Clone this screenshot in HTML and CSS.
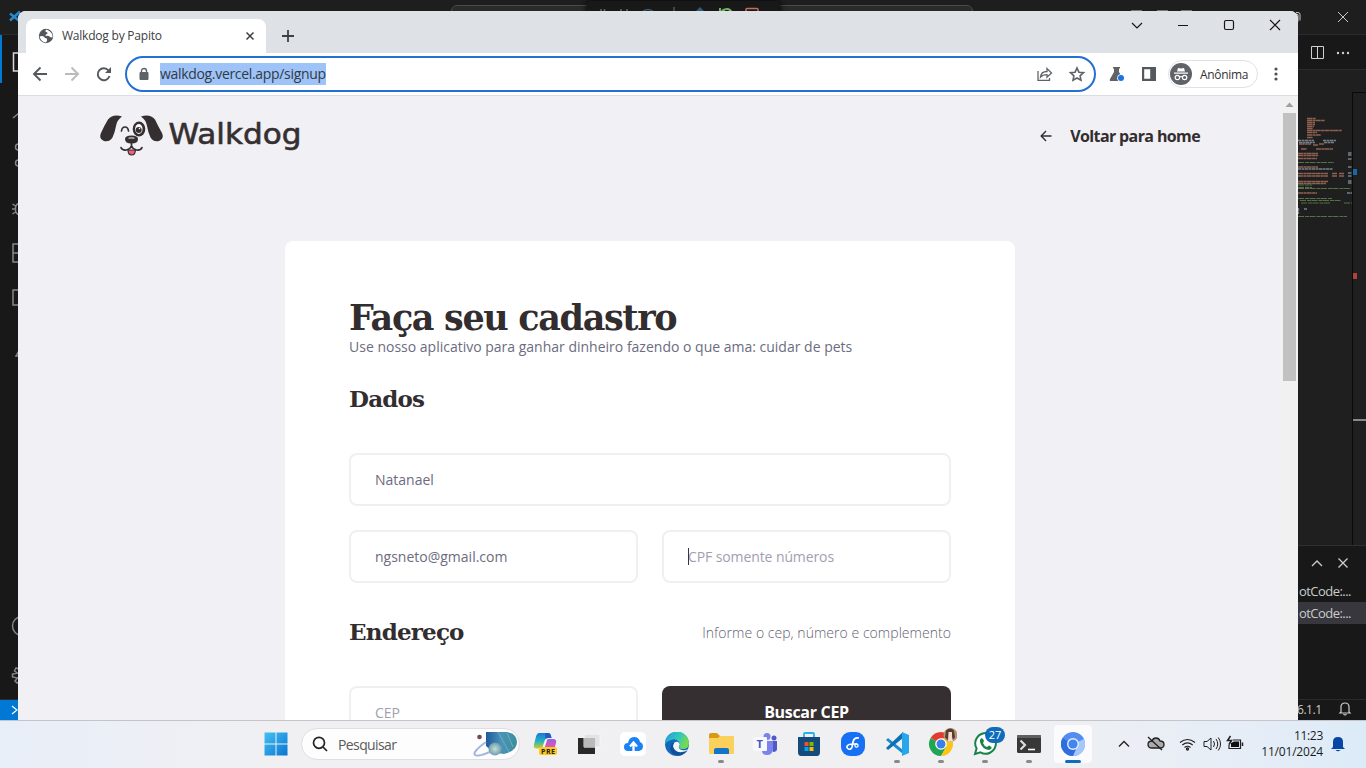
FILE: index.html
```
<!DOCTYPE html>
<html lang="pt-BR">
<head>
<meta charset="utf-8">
<title>Walkdog by Papito</title>
<link rel="stylesheet" href="styles.css">
</head>
<body>
<div class="desktop">
  <div class="editor">
    <div class="ed-title">
      <svg class="ed-logo" width="22" height="34" viewBox="0 0 22 34" fill="none" stroke="#2489ca" stroke-width="2.4"><path d="M10 13.500l10 8M10 20.500l10-9"/></svg>
      <div class="ed-search"></div>
      <svg class="ed-layout" width="70" height="12" viewBox="0 0 70 12" stroke="#777"><path d="M3 10.500h11M29 10.500h11M53 10.500h11"/></svg>
      <svg class="ed-winctl" width="70" height="34" viewBox="0 0 70 34" fill="none" stroke="#c8c8c8"><path d="M-4 14.500h6v7M-2 12.500h4q2 0 2 2v6" /><path d="M42 12l10 10M52 12l-10 10"/></svg>
    </div>
    <div class="debugbar">
      <svg width="193" height="12" viewBox="0 0 193 12" fill="none" stroke-width="1.500"><path d="M14 8v3M17.500 8v3M34 8v3M40 8v3" stroke="#666"/><path d="M55 11q6-5 12 0" stroke="#3c5870"/><path d="M87 6v5" stroke="#555"/><path d="M109 10l4-4 4 4z" fill="#36587a"/><path d="M133 7v3.500h5M135 9.500q7-4 10 2" stroke="#6fb35f" stroke-width="2"/><path d="M159 11V8.500q0-1 1-1h10q1 0 1 1V11" stroke="#c56e58"/></svg>
    </div>
    <div class="ed-main">
      <svg class="activity" width="48" height="664" viewBox="0 35 48 664" fill="none" stroke="#868686" stroke-width="1.500"><path d="M1 35v48" stroke="#0078d4" stroke-width="2"/><path d="M24 53H13.500v18H24" stroke="#d7d7d7"/><path d="M13 118l6-5"/><circle cx="18.500" cy="147" r="3"/><circle cx="18.500" cy="163" r="3"/><path d="M20 203q-4.500 1-4.500 5v2q0 4 4.500 5M15.500 206l-3-2M15.500 209H12M15.500 212l-3 2"/><path d="M22 244h-9v18h9M13 253h9"/><path d="M22 290h-9v15h9"/><path d="M20 349l-4 7h4"/><circle cx="22" cy="626" r="9.500"/><path d="M19 665v4l-3-1-1.500 3 3 2-5 1v3l5 1-2.500 3 2 2 3-2"/></svg>
      <div class="ed-side">
        <div class="ed-tabs"><svg width="68" height="34" viewBox="0 0 68 34" fill="none" stroke="#d0d0d0"><path d="M13.500 11.500h12v12h-12zM19.500 11.500v12"/><g fill="#d0d0d0" stroke="none"><circle cx="40" cy="18" r="1.200"/><circle cx="45" cy="18" r="1.200"/><circle cx="50" cy="18" r="1.200"/></g></svg></div>
        <svg class="minimap" width="68" height="475" viewBox="0 70 68 475" fill="none"><path d="M54.500 545V92.500H68" stroke="#090909"/>
          <g stroke-width="1.400" stroke-dasharray="5 .4 3 .3" stroke="#8f6150"><path d="M9 118.500h9M9 120.500h18M9 122.500h8M9 124.500h8M9 126.500h7M9 128.500h6M9 130.500h35M9 132.500h10M9 135h14M9 137.500h6M1 144h12M15 145h5M21 144h5M3 149h6M18 149h17M0 153.500h20M0 155.500h20M0 158.500h19M0 167h20M0 173.500h30M0 176h30M34 173.500h5M41 173.500h5M34 176h5M41 176h5M0 181.500h30M0 183.500h28M0 193h19"/></g>
          <g stroke-width="1.300" stroke="#77818a" stroke-dasharray="3 .5"><path d="M0 140.500h16M25 140.500h13M1 142.500h16M26 142.500h10M0 169h35M50 153h4M50 155h4M50 159h4M50 167h4M50 173h4M50 176h4M50 181h4M50 183h4M49 193h5M.5 208v6M6 209h3"/></g>
          <g stroke-width="1.200" stroke="#547044" stroke-dasharray="6 1 4 .5"><path d="M0 162.500h36M0 185h14M0 187.500h14M0 188.500h53M0 198.500h34M2 200.500h41M3 203h30M46 203h8M0 216.500h49"/></g>
          <path d="M55 172h4" stroke="#1769ab" stroke-width="6"/><path d="M55 276h4" stroke="#b0423b" stroke-width="6"/><path d="M55 420h13" stroke="#888" stroke-width="2"/></svg>
        <div class="ed-panel">
          <svg width="68" height="34" viewBox="0 0 68 34" fill="none" stroke="#ccc" stroke-width="1.300"><path d="M14 20l5-5 5 5M40.500 12.500l9 9M49.500 12.500l-9 9"/></svg>
          <div class="term">otCode:...</div>
          <div class="term term-on">otCode:...</div>
        </div>
      </div>
    </div>
    <div class="ed-status">
      <div class="remote"><svg width="34" height="21" viewBox="0 0 34 21" fill="none" stroke="#fff" stroke-width="1.200"><path d="M12 6l5 4-5 4"/></svg></div>
      <div class="ed-version"><span>6.1.1</span><svg width="14" height="16" viewBox="0 0 14 16" fill="none" stroke="#ccc" stroke-width="1.200"><path d="M3 11V6q0-4 4-4t4 4v5l1 1H2zM5.500 13q1.500 2 3 0"/></svg></div>
    </div>
  </div>

  <div class="chrome">
    <div class="tabstrip">
      <div class="tab">
        <svg width="16" height="16" viewBox="0 0 16 16"><circle cx="8" cy="8" r="7.200" fill="#53575b"/><path d="M1.500 8.500q3.500-1 4.700.5 1 1.500 2.800 1.500v2.500l-1 1.500Q3 14 1.500 8.500zM8.500 1.500q-2 1.500-.5 2.500 2 0 1.500 1.500-2.500 1-2 2.500 3-.7 4 .5t3 .8Q15 4 8.500 1.500z" fill="#fff"/></svg>
        <span class="tab-name">Walkdog by Papito</span>
        <svg width="10" height="10" viewBox="0 0 10 10" stroke="#3c4043" stroke-width="1.500"><path d="M1.500 1.500l7 7M8.500 1.500l-7 7"/></svg>
      </div>
      <svg class="newtab" width="14" height="14" viewBox="0 0 14 14" stroke="#3c4043" stroke-width="1.800"><path d="M7 1v12M1 7h12"/></svg>
      <svg class="winctl" width="156" height="28" viewBox="0 0 156 28" fill="none" stroke="#161616" stroke-width="1.200"><path d="M4 12l5 5 5-5M50 14.500h10"/><rect x="96.500" y="9.500" width="9" height="9" rx="1.500"/><path d="M142 9l10 10M152 9l-10 10"/></svg>
    </div>
    <div class="toolbar">
      <svg class="nav" width="88" height="20" viewBox="0 0 88 20" fill="none" stroke-width="1.900"><path d="M17 10H4M10.500 3.500L4 10l6.500 6.500" stroke="#55595d"/><path d="M35 10h13M41.500 3.500L48 10l-6.500 6.500" stroke="#b9bbbd"/><path d="M78.500 6.500A6 6 0 1 0 79.500 12" stroke="#55595d"/><path d="M81 3v6h-6z" fill="#55595d"/></svg>
      <div class="omnibox">
        <svg width="10" height="14" viewBox="0 0 10 14"><rect x=".5" y="5" width="9" height="8" rx="1" fill="#5f6368"/><path d="M2.500 5.500V4a2.500 2.500 0 0 1 5 0v1.500" fill="none" stroke="#5f6368" stroke-width="1.400"/></svg>
        <span class="url">walkdog.vercel.app/signup</span>
        <svg class="omni-act" width="50" height="18" viewBox="0 0 50 18" fill="none" stroke="#5f6368" stroke-width="1.300"><path d="M2 6v9.300h11.500V13M4.500 12q.5-5.500 6.500-5.500V3.500L15.500 8 11 12.300V9.600q-4.500 0-6.500 2.400z"/><path stroke-width="1.600" d="M41 3l1.900 4.200 4.600.5-3.400 3.100.9 4.500-4-2.300-4 2.300.9-4.500-3.400-3.100 4.600-.5z"/></svg>
      </div>
      <svg class="flask" width="16" height="16" viewBox="0 0 16 16"><path d="M4 1h7v1.500h-1V6l4 7q.5 2-1 2H2q-2 0-1-2l4-7V2.500H4z" fill="#5f6368"/><circle cx="12" cy="12" r="3.800" fill="#fff"/><circle cx="12" cy="12" r="3" fill="#1a73e8"/></svg>
      <svg class="panel-ico" width="14" height="14" viewBox="0 0 14 14"><path fill="#55595d" fill-rule="evenodd" d="M0 0h14v14H0zM2.200 2.200v9.600h6V2.200z"/></svg>
      <div class="profile">
        <svg width="22" height="22" viewBox="0 0 22 22"><circle cx="11" cy="11" r="11" fill="#5f6368"/><path d="M7 8.500L8 5q3 .8 6 0l1 3.500z" fill="#fff"/><g fill="none" stroke="#fff" stroke-width="1.200"><path d="M4 10.200h14M9.500 14q1.500-1 3 0"/><circle cx="7.400" cy="14.500" r="2.200"/><circle cx="14.600" cy="14.500" r="2.200"/></g></svg>
        <span>Anônima</span>
      </div>
      <svg class="kebab" width="4" height="14" viewBox="0 0 4 14" fill="#4d5155"><circle cx="2" cy="2" r="1.600"/><circle cx="2" cy="7" r="1.600"/><circle cx="2" cy="12" r="1.600"/></svg>
    </div>
    <div class="viewport">
      <div class="page">
        <header class="site-head">
          <svg class="logo" width="202" height="44" viewBox="0 0 202 44">
            <g fill="#352f31"><path d="M22 2.500Q13-.5 8 5.500 4 12 1 19q-2.500 6 3 8 5 1.500 8.500-3.500Q15 18 16 12q1-6 6-9.500zM41 2.500q9-3 14 3Q58 12 62 19q2.500 6-3 8-5 1.500-8.500-3.500Q48 18 47 12q-1-6-6-9.500z"/><ellipse cx="39" cy="15" rx="6.300" ry="7.500"/><path d="M25 25q0-3.500 6.500-3.500T38 25q0 4.500-6.500 4.500T25 25z"/></g>
            <ellipse cx="38.800" cy="15" rx="3.700" ry="5" fill="#fff"/><circle cx="38.700" cy="16" r="3" fill="#352f31"/><circle cx="39.500" cy="14.500" r=".8" fill="#fff"/><path d="M28.500 24.300q3-1 6 0" stroke="#ddd" stroke-width="1.200"/>
            <path d="M28 36q0 5 3.700 5t3.700-5z" fill="#f1617c" stroke="#352f31" stroke-width="1.200"/>
            <g fill="none" stroke="#352f31" stroke-width="1.700" stroke-linecap="round"><path d="M21.500 17q.5-4 3.500-4t3.500 4"/><path d="M31.500 29v4M21 33.500q1 3 5.500 2.500 4-1 5-4 1 3 5 4 4.500.5 5.500-2.500"/></g>
            <text class="logo-text" x="68.500" y="30" textLength="133" lengthAdjust="spacingAndGlyphs">Walkdog</text>
          </svg>
          <a class="back"><svg width="12" height="12" viewBox="0 0 12 12" fill="none" stroke="#352f31" stroke-width="1.400"><path d="M11.500 6H1.200M6 1L1.200 6 6 11"/></svg><span>Voltar para home</span></a>
        </header>
        <main class="card">
          <h1>Faça seu cadastro</h1>
          <p class="lead">Use nosso aplicativo para ganhar dinheiro fazendo o que ama: cuidar de pets</p>
          <div class="legend"><h2>Dados</h2></div>
          <div class="fields">
            <div class="field full"><span>Natanael</span></div>
            <div class="field"><span>ngsneto@gmail.com</span></div>
            <div class="field ph"><i class="caret"></i><span class="cpf">CPF somente números</span></div>
          </div>
          <div class="legend second"><h2>Endereço</h2><span class="hint">Informe o cep, número e complemento</span></div>
          <div class="fields">
            <div class="field ph"><span>CEP</span></div>
            <div class="btn">Buscar CEP</div>
          </div>
        </main>
      </div>
      <div class="scroll"><svg width="16" height="17" viewBox="0 0 16 17"><path d="M3.500 11L7.500 6.500 11.500 11z" fill="#a0a0a0"/></svg><div class="thumb"></div></div>
    </div>
  </div>

  <div class="taskbar">
    <div class="cell start"><svg width="24" height="24" viewBox="0 0 24 24"><defs><linearGradient id="w" x1="0" y1="0" x2="1" y2="1"><stop offset="0" stop-color="#44c2f5"/><stop offset="1" stop-color="#0a74d0"/></linearGradient></defs><path fill="url(#w)" d="M0.500 .5h11v11h-11zM12.500 .5h11v11h-11zM.5 12.500h11v11h-11zM12.500 12.500h11v11h-11z"/></svg></div>
    <div class="search">
      <svg width="16" height="16" viewBox="0 0 16 16" fill="none" stroke="#222" stroke-width="1.700"><circle cx="7" cy="6.800" r="5.500"/><path d="M11 11l4 4"/></svg>
      <span>Pesquisar</span>
      <svg class="planet" width="46" height="26" viewBox="0 0 46 26"><defs><linearGradient id="pl" x1="0" x2="1"><stop offset="0" stop-color="#1f599c"/><stop offset=".5" stop-color="#4a94b8"/><stop offset="1" stop-color="#398e9b"/></linearGradient><radialGradient id="pm"><stop offset="0" stop-color="#c6e2c9"/><stop offset="1" stop-color="#6f9db8"/></radialGradient></defs><path d="M13 1h20q11 1 11 10T31 23q-11-1-18-8z" fill="url(#pl)"/><path d="M25 1l11 20M34 2l6 14" stroke="#72abc1"/><path d="M13 11Q-1 21 2 24t26-8" fill="none" stroke="#a3b5e2" stroke-width="2"/><circle cx="22" cy="18" r="6.500" fill="url(#pm)"/><circle cx="6.500" cy="6" r="2.300" fill="#76454d"/></svg>
    </div>
    <div class="cell"><svg width="24" height="24" viewBox="0 0 24 24"><defs><linearGradient id="c1" x1="0" y1="0" x2="0" y2="1"><stop offset="0" stop-color="#1b78d8"/><stop offset=".5" stop-color="#22b0c4"/><stop offset="1" stop-color="#c9cf2b"/></linearGradient><linearGradient id="c2" x1="0" y1="0" x2="0" y2="1"><stop offset="0" stop-color="#9a5ee6"/><stop offset=".5" stop-color="#d857b8"/><stop offset="1" stop-color="#f27c50"/></linearGradient></defs><path d="M6 1h9q2.500 0 3 3l.5 2H15q-2.500 0-3.500 3l-2 6q-.5 1.500-2 1.500H3.500Q0 16.500 1 12.500l2-8Q4 1 6 1z" fill="url(#c1)"/><path d="M12 1h3q2.500 0 3 3l.5 2H15q-1.500 0-2.500 1z" fill="#1d5ec4"/><path d="M15 7h5q4 0 3 4l-2 7q-1 3-4 3h-7l3.500-11q.5-3 1.500-3z" fill="url(#c2)"/><rect x="6" y="15" width="18" height="8" rx="2" fill="#ffc91f"/><text x="8" y="21.700" class="pre" textLength="14">PRE</text></svg></div>
    <div class="cell"><svg width="24" height="24" viewBox="0 0 24 24"><path d="M1 6h17v16H1z" fill="#292929"/><path d="M7 2h16v13H7z" fill="#e2e2e2" stroke="#f7f7f7" opacity=".9"/><path d="M7 6h11v9.500H7z" fill="#bababa"/></svg></div>
    <div class="cell"><svg width="26" height="24" viewBox="0 0 26 24"><rect width="26" height="24" rx="5" fill="#fff"/><path d="M8 19q-4 0-4-4t4-4q1-6 6-6t6 5q3 1 3 4.500T19 19z" fill="#1c82f4"/><path d="M13.500 21v-9M10 14.500l3.500-4 3.500 4" fill="none" stroke="#fff" stroke-width="2.300"/></svg></div>
    <div class="cell"><svg width="24" height="24" viewBox="0 0 24 24"><defs><linearGradient id="e1" x1="0" x2="1" y2=".4"><stop offset="0" stop-color="#219bdc"/><stop offset=".6" stop-color="#31c9bd"/><stop offset="1" stop-color="#77d951"/></linearGradient></defs><circle cx="12" cy="12" r="12" fill="#1268bb"/><path d="M0 12A12 12 0 0 1 24 11q0 6-6 6-4 0-4-2 2-3 0-5-3-4-8-2-4 1-6 4z" fill="url(#e1)"/><path d="M9 11q-2 3 0 6 3 5 10 4l4-4q-3 2-6 1-4-1-3-4 2-2-1-4-2-1-4 1z" fill="#eff5f8"/><path d="M9 11q-2 3 0 6 3 5 13 2-6 7-14 3-5-5-1-11z" fill="#134f99"/></svg></div>
    <div class="cell run"><svg width="26" height="24" viewBox="0 0 26 24"><path d="M1 3q0-2 2-2h6l3 3v5H1z" fill="#d89a13"/><path d="M1 6h9l2-2h13q1 0 1 1v16q0 1-1 1H2q-1 0-1-1z" fill="#fbd15c"/><path d="M6 22v-4q0-2 2-2h11q2 0 2 2v4z" fill="#1474c9"/></svg></div>
    <div class="cell"><svg width="26" height="24" viewBox="0 0 26 24"><circle cx="15" cy="4.500" r="3.500" fill="#7b83eb"/><circle cx="22" cy="6" r="2.500" fill="#5059c9"/><path d="M19 9h6v8q0 3-4 3z" fill="#5059c9"/><path d="M10 9h11v9q-1 5-6 5t-5-4z" fill="#7b83eb"/><rect x="1" y="5" width="14" height="14" rx="1" fill="#f7f8fb"/><text x="4.500" y="16" class="team">T</text></svg></div>
    <div class="cell"><svg width="24" height="24" viewBox="0 0 24 24"><path d="M7 6V2q0-1 1-1h8q1 0 1 1v4" fill="none" stroke="#29aee5" stroke-width="1.800"/><path d="M1 5h22v15q0 4-3 4H4q-3 0-3-4z" fill="#154b7c"/><path d="M7.500 10h4v4h-4z" fill="#f25022"/><path d="M12.500 10h4v4h-4z" fill="#7fba00"/><path d="M7.500 15h4v4h-4z" fill="#00a4ef"/><path d="M12.500 15h4v4h-4z" fill="#ffb900"/></svg></div>
    <div class="cell"><svg width="24" height="24" viewBox="0 0 24 24"><rect width="24" height="24" rx="9" fill="#176ff4"/><path d="M18 6q-5-1-6 4l-1 5q-1 3-3.500 2t-1-3.500Q8 12 11 12h5" fill="none" stroke="#fff" stroke-width="1.700"/><circle cx="15.500" cy="13.500" r="1.600" fill="none" stroke="#fff" stroke-width="1.300"/></svg></div>
    <div class="cell run"><svg width="24" height="24" viewBox="0 0 24 24"><path d="M1 8l2-2 15 12v4z" fill="#1c8ad0"/><path d="M1 16l2 2L18 6V0z" fill="#0d6fb4"/><path d="M17 0l7 3v18l-7 3z" fill="#29a6ea"/></svg></div>
    <div class="cell run"><svg class="chr" width="32" height="32" viewBox="0 0 32 32"><path d="M16 16L5.600 10A12 12 0 0 1 26.400 10z" fill="#e33b2e"/><path d="M16 16L5.600 10A12 12 0 0 0 16 28l5.200-9z" fill="#22a553"/><path d="M16 10h10.400A12 12 0 0 1 16 28l5.200-9z" fill="#fbc517"/><circle cx="16" cy="16" r="5.800" fill="#fff"/><circle cx="16" cy="16" r="4.500" fill="#3b80ea"/><circle cx="25.500" cy="7" r="7" fill="#b79677"/><path d="M21 2.500q4.500-4 8 0l1 7q-4.500 6-10 0z" fill="#5a3b2f"/><path d="M23.500 4h3.500v4.500l1 5h-5z" fill="#f0dfcf"/></svg></div>
    <div class="cell run"><svg width="24" height="24" viewBox="0 0 24 24"><path d="M2 22l1.600-5.500A10.300 10.300 0 1 1 7.500 20.400z" fill="#fff" stroke="#16824a" stroke-width="2"/><path d="M7 8q1-3 3-1l1 2-1 2q1 3 4 4l2-1.500 2.500 1.500q.5 2-2.500 3-7-1-9-8z" fill="#16824a"/></svg><b class="badge">27</b></div>
    <div class="cell run"><svg width="24" height="20" viewBox="0 0 24 20"><rect y="1" width="24" height="18" rx="1.500" fill="#383838"/><path d="M0 4V2q0-1 1-1h22q1 0 1 1v2z" fill="#606060"/><path d="M3.500 6.500L8 11l-4.500 4.500" fill="none" stroke="#ddd" stroke-width="2.200"/><path d="M11 15.500h7" stroke="#fff" stroke-width="1.600"/></svg></div>
    <div class="cell active"><svg width="24" height="24" viewBox="0 0 24 24"><circle cx="12" cy="12" r="12" fill="#538def"/><path d="M12 12l11-5a12 12 0 0 1-11 17z" fill="#a5c7fb"/><path d="M1.600 6A12 12 0 0 0 12 24l4-9z" fill="#2f6fdd"/><circle cx="12" cy="12" r="6" fill="#e4eefd"/><circle cx="12" cy="12" r="4.600" fill="#4385ee"/></svg></div>
    <div class="tray">
      <svg width="130" height="20" viewBox="0 0 130 20" fill="none" stroke="#202020" stroke-width="1.300"><path d="M5 12.500l5-5 5 5"/><path d="M38 14q-4 0-4-3.500T38 7q1-3 4-3t4 3q4 0 4 3.500T46 14z" fill="#aaa"/><path d="M34 3l14 13"/><path d="M66 8.500q7.500-6 15 0M68.300 11q5.200-4.300 10.400 0M70.500 13.500q3-2.500 6 0" stroke-width="1.200"/><circle cx="73.500" cy="15" r="1"/><path d="M90 7.500h3l4-3.500v12l-4-3.500h-3zM99.500 7q2 3 0 6M102 5q3.500 5 0 10M104.300 3.500q4.500 6.500 0 13" stroke-width="1"/><path d="M119 6h7.500v8.500H115v-4" stroke-width="1.200"/><path d="M117 9l3-1.500h5V13h-8z" fill="#111" stroke="none"/><path d="M128.500 8.500v3.500M116.500 2l-3 4.500h4l-2.500 4" stroke-width="1.500"/></svg>
      <div class="clock"><span class="time">11:23</span><span class="date">11/01/2024</span></div>
      <svg class="bell" width="14" height="16" viewBox="0 0 14 16"><path d="M2 11V6q0-5 5-5t5 5v5l2 2H0zM4.500 14h5q-2.500 2.500-5 0z" fill="#0646a4"/></svg>
    </div>
  </div>
</div>
</body>
</html>
```
FILE: styles.css
```
* { box-sizing: border-box; }
body { margin: 0; font-family: "Open Sans", "Noto Sans", sans-serif; overflow: hidden; }
svg { display: block; flex: none; }
span { white-space: nowrap; }
.desktop { position: relative; width: 1366px; height: 768px; overflow: hidden; display: flex; flex-direction: column; }

/* Editor window behind the browser */
.editor { position: relative; height: 720px; background: #1f1f1f; display: flex; flex-direction: column; }
.ed-title { height: 35px; display: flex; border-bottom: 1px solid #2b2b2b; background: #1e1e1e; }
.ed-search { width: 522px; height: 22px; margin: 5px 0 0 429px; border: 1px solid #4b4b4b; border-radius: 6px; background: #2a2a2a; }
.ed-layout { margin-left: 155px; }
.ed-winctl { margin-left: auto; }
.debugbar { position: absolute; left: 587px; top: 1px; width: 193px; height: 26px; background: #181818; box-shadow: 0 0 6px #000; border-radius: 4px; }
.ed-main { flex: 1; display: flex; justify-content: space-between; }
.activity { background: #181818; }
.ed-side { width: 68px; display: flex; flex-direction: column; }
.ed-tabs { height: 35px; background: #181818; border-bottom: 1px solid #2b2b2b; }
.ed-panel { flex: 1; background: #181818; border-top: 1px solid #303030; color: #ccc; font-size: 13px; line-height: 22px; }
.term { height: 22px; letter-spacing: -.55px; padding-left: 1px; white-space: nowrap; }
.term-on { background: #37373d; }
.ed-status { height: 21px; background: #181818; border-top: 1px solid #2b2b2b; display: flex; justify-content: space-between; }
.remote { width: 34px; background: #0078d4; }
.ed-version { width: 69px; height: 18px; display: flex; gap: 16px; align-items: center; font-size: 12px; letter-spacing: -.45px; color: #ccc; }

/* Browser window */
.chrome { position: absolute; left: 18px; top: 11px; width: 1280px; height: 709px; border-radius: 8px 8px 0 0; overflow: hidden; background: #fff; display: flex; flex-direction: column; }
.tabstrip { height: 42px; background: #dee1e6; display: flex; padding-left: 8px; }
.tab { width: 240px; height: 34px; margin-top: 8px; border-radius: 8px 8px 0 0; background: #fff; display: flex; align-items: center; padding: 0 11px 0 12px; }
.tab-name { flex: 1; margin-left: 8px; margin-top: -1px; font-size: 12px; letter-spacing: -.22px; color: #3c4043; }
.newtab { margin: 18px 0 0 15px; }
.winctl { margin-left: auto; margin-right: 14px; }
.toolbar { height: 43px; border-bottom: 1px solid #dcdde2; display: flex; align-items: center; padding-left: 12px; }
.omnibox { width: 971px; height: 36px; margin-left: 7px; border: 2px solid #2370d3; border-radius: 18px; display: flex; align-items: center; padding: 0 8px 0 12px; }
.url { margin-left: 11px; background: #9dc3f8; font-size: 14px; line-height: 22px; letter-spacing: -.32px; color: #333a43; }
.omni-act { margin-left: auto; }
.flask { margin-left: 13px; }
.panel-ico { margin-left: 17px; }
.profile { width: 90px; height: 28px; margin-left: 12px; border: 1px solid #dfe1e5; border-radius: 14px; display: flex; align-items: center; gap: 8px; padding-left: 1px; font-size: 12px; letter-spacing: -.3px; color: #333; }
.kebab { margin-left: 16px; }
.viewport { flex: 1; min-height: 0; display: flex; background: #f0f0f5; }
.page { width: 1264px; padding: 0 82px; overflow: hidden; }
.scroll { width: 16px; background: #f1f1f1; }
.thumb { width: 13px; height: 268px; margin-left: 1px; background: #c1c1c1; }

/* Signup page */
.site-head { display: flex; height: 145px; justify-content: space-between; padding-top: 18px; }
.logo-text { font-family: "DejaVu Sans", sans-serif; font-size: 28px; fill: #352f31; stroke: #352f31; stroke-width: .6px; }
.back { display: flex; align-items: center; gap: 18px; height: 44px; font-size: 16px; font-weight: 700; letter-spacing: -.62px; color: #322d2f; }
.card { width: 730px; height: 600px; margin-left: 185px; padding: 56px 64px 0; border-radius: 8px; background: #fff; color: #322d2f; }
h1, h2 { margin: 0; font-family: "DejaVu Serif", serif; font-weight: 700; white-space: nowrap; }
h1 { height: 40px; line-height: 41px; font-size: 35px; letter-spacing: -1.35px; }
h2 { line-height: 30px; font-size: 23px; letter-spacing: -.8px; }
.lead { margin: 0 0 27px; line-height: 19px; height: 20px; font-size: 14px; color: #6c6c80; white-space: nowrap; }
.legend { display: flex; justify-content: space-between; align-items: center; height: 30px; margin-bottom: 39px; }
.second { margin-top: 34px; }
.hint { font-size: 14px; font-weight: 300; letter-spacing: .04px; color: #5f5f70; }
.fields { display: grid; grid-template-columns: 1fr 1fr; gap: 24px; }
.field { position: relative; height: 53px; border: 2px solid #f0f0f3; border-radius: 8px; display: flex; align-items: center; padding: 0 24px; font-size: 14px; color: #6c6c80; }
.cpf { letter-spacing: -.1px; }
.full { grid-column: 1 / 3; }
.ph { color: #a0a0b2; }
.caret { position: absolute; left: 24px; top: 16px; width: 1px; height: 17px; background: #34344a; }
.btn { height: 53px; border-radius: 8px; background: #352f31; color: #fff; font-size: 16px; font-weight: 700; display: flex; align-items: center; justify-content: center; letter-spacing: -.3px; padding-bottom: 2px; }

/* Taskbar */
.taskbar { position: relative; height: 48px; background: linear-gradient(90deg, #e8eef8, #f0f0f3 20%, #f0f0f2 75%, #e5edf7 92%, #dcebf8); border-top: 1px solid #c4c4c9; display: flex; align-items: center; padding: 0 0 1px 254px; }
.cell { position: relative; width: 44px; height: 46px; display: flex; align-items: center; justify-content: center; }
.search { width: 219px; height: 32px; margin: 0 3px; border-radius: 16px; background: #fdfdfe; border: 1px solid #dedee2; display: flex; align-items: center; padding-left: 10px; font-size: 14px; color: #5a5a5a; }
.search span { margin-left: 10px; letter-spacing: -.6px; }
.planet { margin-left: auto; }
.run::after, .active::after { content: ""; position: absolute; bottom: 4px; width: 6px; height: 3px; border-radius: 2px; background: #8a8a8d; }
.active::before { content: ""; position: absolute; inset: 4px 3px 4px 3px; border-radius: 4px; background: #fbfbfd; }
.active svg { position: relative; }
.active::after { width: 16px; background: #0f6cbd; }
.badge { position: absolute; left: 22px; top: 6px; width: 20px; height: 16px; border-radius: 8px; background: #0f6cbd; color: #fff; font-size: 11px; font-weight: 400; line-height: 16px; text-align: center; }
.pre { font-size: 7px; font-weight: 700; fill: #222; }
.team { font-size: 11px; font-weight: 700; fill: #4b53bc; }
.tray { flex: 1; display: flex; align-items: center; padding-left: 19px; color: #1c1c1c; font-size: 12px; }
.clock { width: 79px; display: flex; flex-direction: column; align-items: flex-end; line-height: 16px; letter-spacing: -.2px; }
.time { letter-spacing: -.3px; }
.bell { margin-left: 8px; }
```
